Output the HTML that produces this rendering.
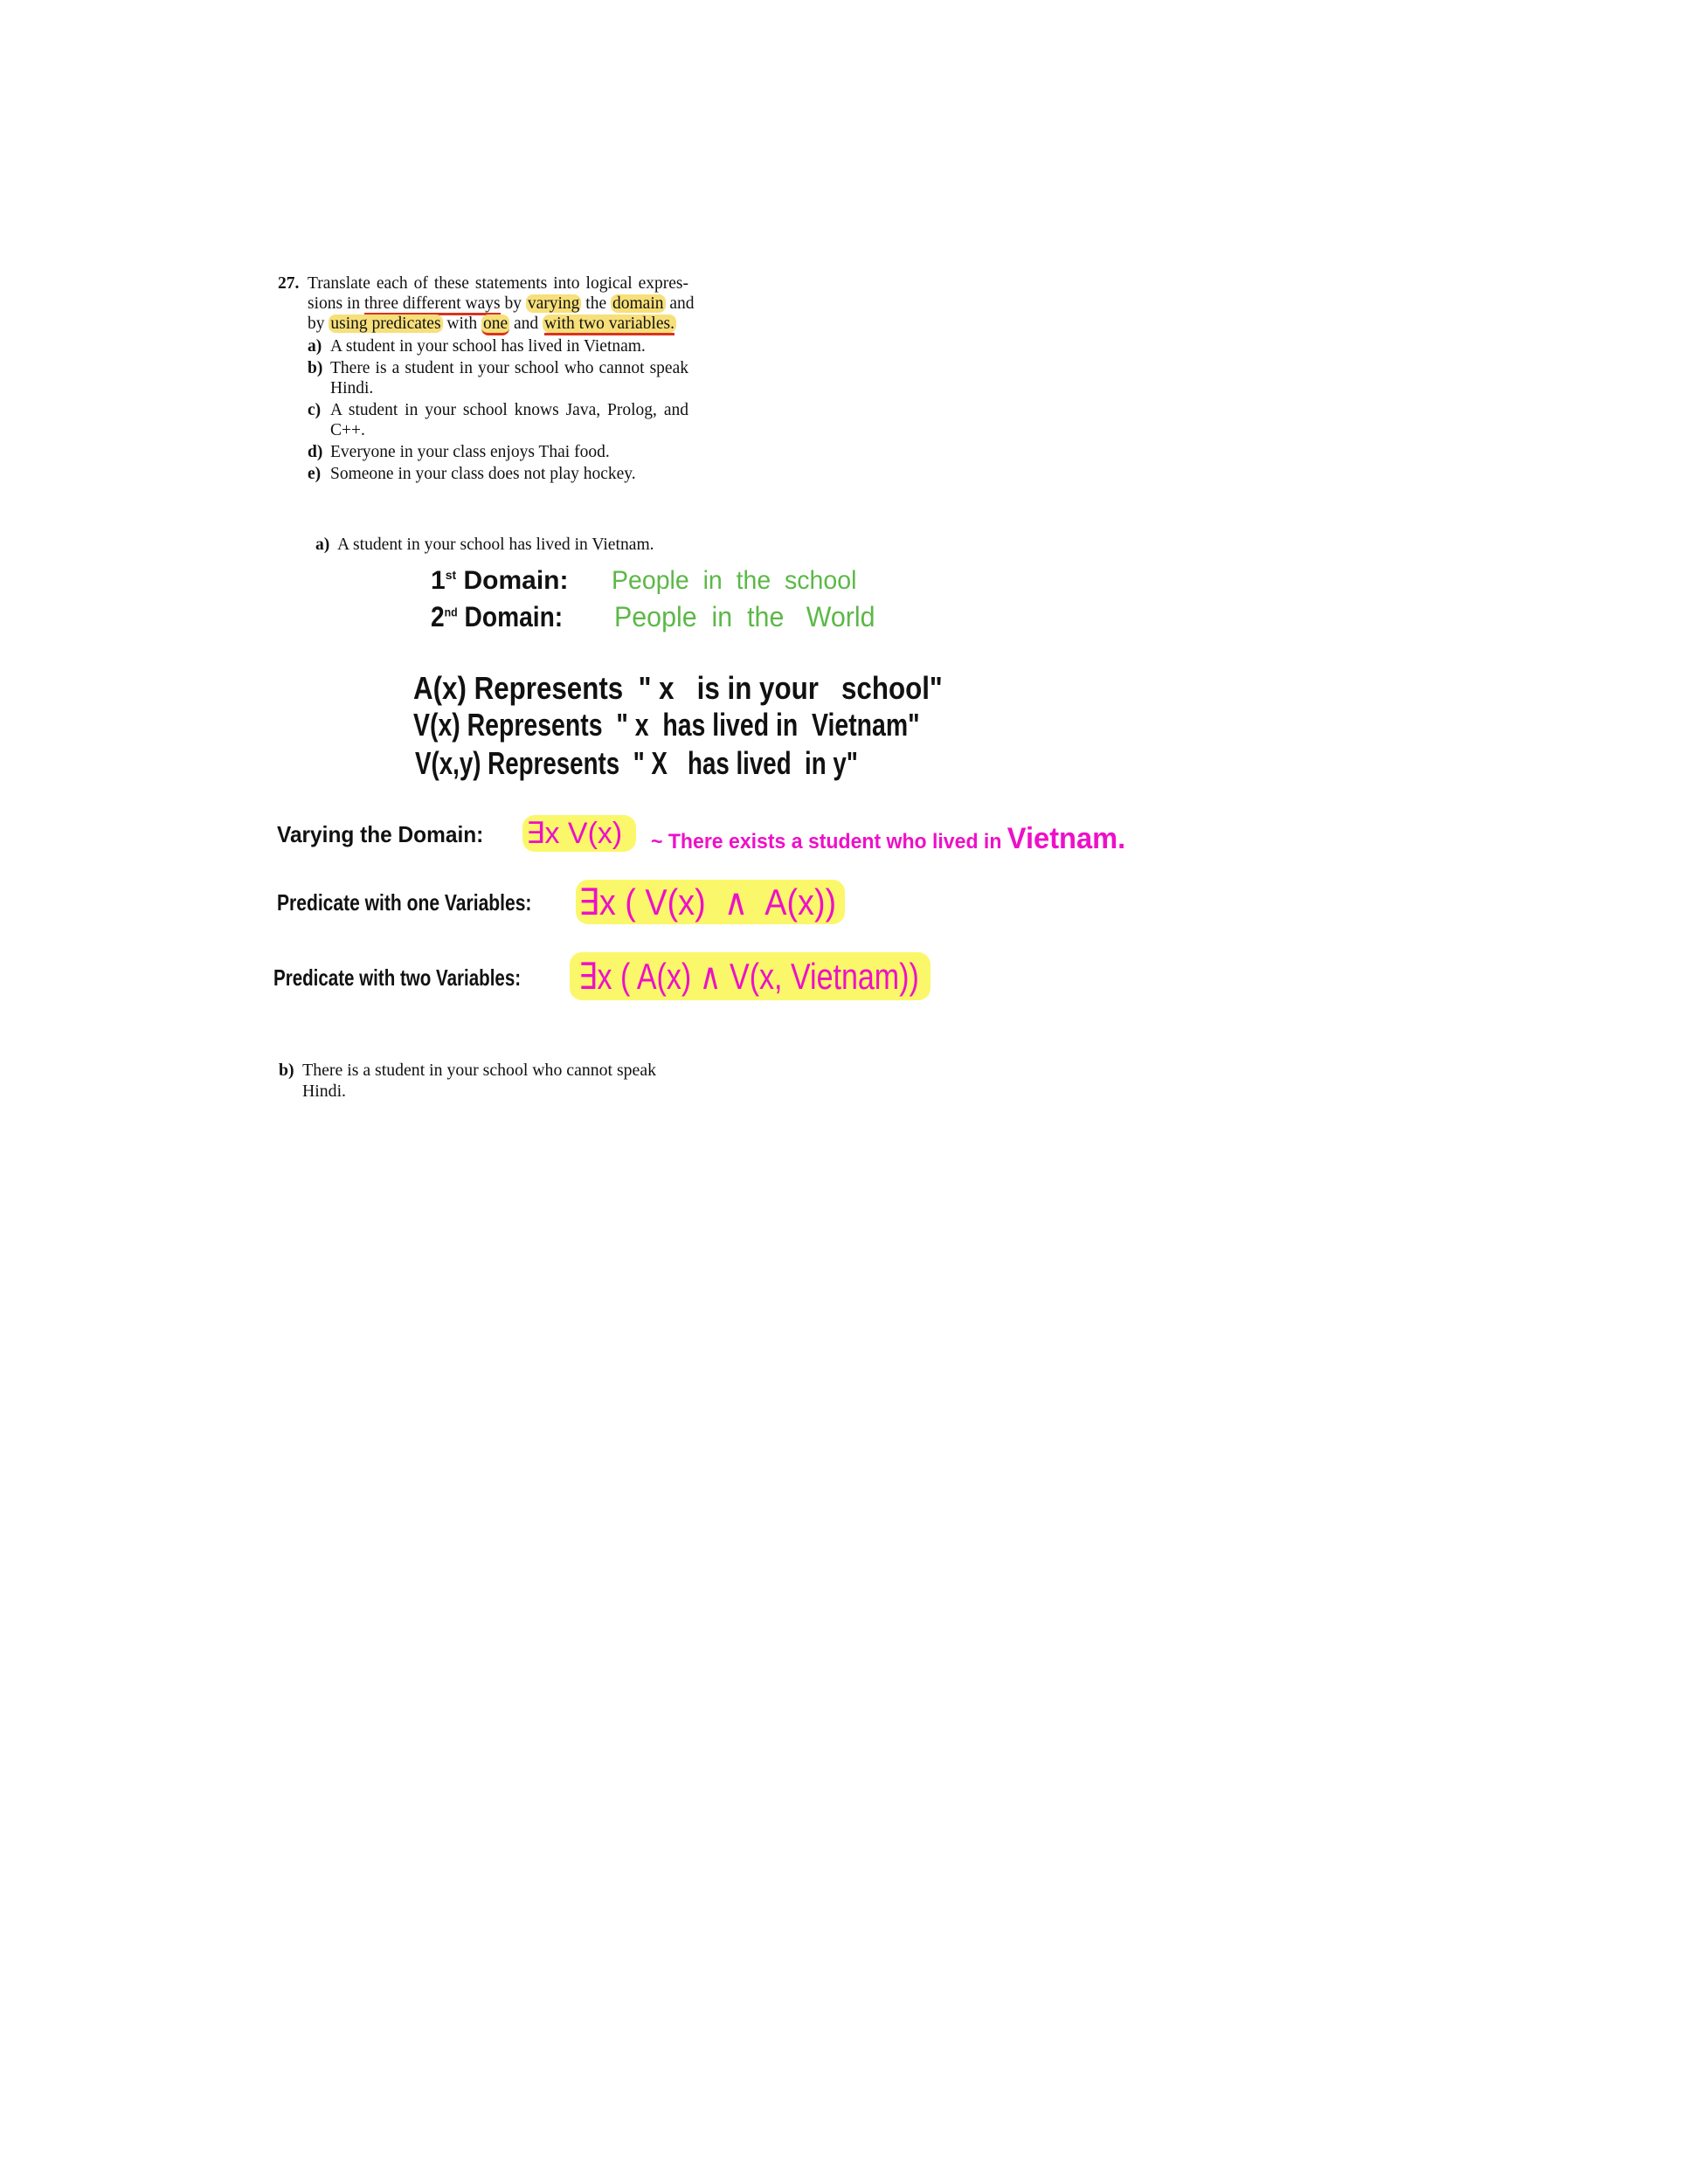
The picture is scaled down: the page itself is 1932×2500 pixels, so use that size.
<!DOCTYPE html>
<html><head><meta charset="utf-8">
<style>
html,body{margin:0;padding:0;background:#fff;}
body{width:1932px;height:2500px;position:relative;overflow:hidden;}
.t{position:absolute;font-family:"Liberation Serif",serif;color:#111;white-space:nowrap;}
.p{font-size:19.5px;line-height:23px;}
.j{display:block;width:436px;text-align:justify;text-align-last:justify;}
.hl{background:#f7e07a;border-radius:8px;padding:0 2px;}
.ul{border-bottom:3px solid #d9321f;}
.h{position:absolute;font-family:"Liberation Sans",sans-serif;white-space:nowrap;transform-origin:0 50%;}
.blk{color:#111;font-weight:bold;}
.grn{color:#5cb847;}
.mag{color:#ee10c8;}
.yl{position:absolute;background:#fbf65a;border-radius:14px;opacity:.9;}
</style></head><body>

<div class="t p" style="left:318px;top:313px;font-weight:bold;">27.</div>
<div class="t p" style="left:352px;top:313px;"><span class="j">Translate each of these statements into logical expres-</span></div>
<div class="t p" style="left:352px;top:336px;"><span class="j">sions in <span class="ul">three different ways</span> by <span class="hl">varying</span> the <span class="hl">domain</span> and</span></div>
<div class="t p" style="left:352px;top:359px;">by <span class="hl">using predicates</span> with <span class="hl ul">one</span> and <span class="hl"><span class="ul">with two variables.</span></span></div>
<div class="t p" style="left:352px;top:385px;"><b>a)</b></div><div class="t p" style="left:378px;top:385px;">A student in your school has lived in Vietnam.</div>
<div class="t p" style="left:352px;top:410px;"><b>b)</b></div><div class="t p" style="left:378px;top:410px;"><span class="j" style="width:410px">There is a student in your school who cannot speak</span></div>
<div class="t p" style="left:378px;top:433px;">Hindi.</div>
<div class="t p" style="left:352px;top:458px;"><b>c)</b></div><div class="t p" style="left:378px;top:458px;"><span class="j" style="width:410px">A student in your school knows Java, Prolog, and</span></div>
<div class="t p" style="left:378px;top:481px;">C++.</div>
<div class="t p" style="left:352px;top:506px;"><b>d)</b></div><div class="t p" style="left:378px;top:506px;">Everyone in your class enjoys Thai food.</div>
<div class="t p" style="left:352px;top:531px;"><b>e)</b></div><div class="t p" style="left:378px;top:531px;">Someone in your class does not play hockey.</div>

<div class="t" style="left:361px;top:613px;font-size:19.6px;"><b>a)</b>&nbsp; A student in your school has lived in Vietnam.</div>

<div class="h blk" style="left:493px;top:648px;font-size:30px;transform:scaleX(1.0);">1<sup style="font-size:14px">st</sup> Domain:</div>
<div class="h grn" style="left:700px;top:648px;font-size:30px;transform:scaleX(.95);">People&nbsp; in&nbsp; the&nbsp; school</div>
<div class="h blk" style="left:493px;top:688px;font-size:32px;transform:scaleX(.88);">2<sup style="font-size:14px">nd</sup> Domain:</div>
<div class="h grn" style="left:703px;top:688px;font-size:32px;transform:scaleX(.95);">People&nbsp; in&nbsp; the&nbsp;&nbsp; World</div>

<div class="h blk" style="left:473px;top:767px;font-size:36px;transform:scaleX(.87);">A(x) Represents&nbsp; "&nbsp;x&nbsp;&nbsp; is in your&nbsp;&nbsp; school"</div>
<div class="h blk" style="left:473px;top:809px;font-size:36px;transform:scaleX(.79);">V(x) Represents&nbsp; "&nbsp;x&nbsp; has lived in&nbsp; Vietnam"</div>
<div class="h blk" style="left:475px;top:853px;font-size:36px;transform:scaleX(.77);">V(x,y) Represents&nbsp; "&nbsp;X&nbsp;&nbsp; has lived&nbsp; in y"</div>

<div class="yl" style="left:598px;top:933px;width:130px;height:42px;"></div>
<div class="h blk" style="left:317px;top:940px;font-size:26px;transform:scaleX(.94);">Varying the Domain:</div>
<div class="h mag" style="left:602px;top:934px;font-size:34px;transform:scaleX(1.0);">∃x V(x)</div>
<div class="h mag" style="left:745px;top:941px;font-size:24px;font-weight:bold;transform:scaleX(.96);">~ There exists a student who lived in <span style="font-size:34px">Vietnam.</span></div>

<div class="yl" style="left:659px;top:1007px;width:308px;height:51px;"></div>
<div class="h blk" style="left:317px;top:1018px;font-size:26px;transform:scaleX(.81);">Predicate with one Variables:</div>
<div class="h mag" style="left:662px;top:1008px;font-size:42px;transform:scaleX(.9);">∃x ( V(x)&nbsp; ∧&nbsp; A(x))</div>

<div class="yl" style="left:652px;top:1090px;width:413px;height:55px;"></div>
<div class="h blk" style="left:313px;top:1104px;font-size:26px;transform:scaleX(.79);">Predicate with two Variables:</div>
<div class="h mag" style="left:662px;top:1093px;font-size:42px;transform:scaleX(.81);">∃x ( A(x) ∧ V(x, Vietnam))</div>

<div class="t" style="left:319px;top:1214px;font-size:19.8px;"><b>b)</b>&nbsp; There is a student in your school who cannot speak</div>
<div class="t" style="left:346px;top:1238px;font-size:19.8px;">Hindi.</div>

</body></html>
